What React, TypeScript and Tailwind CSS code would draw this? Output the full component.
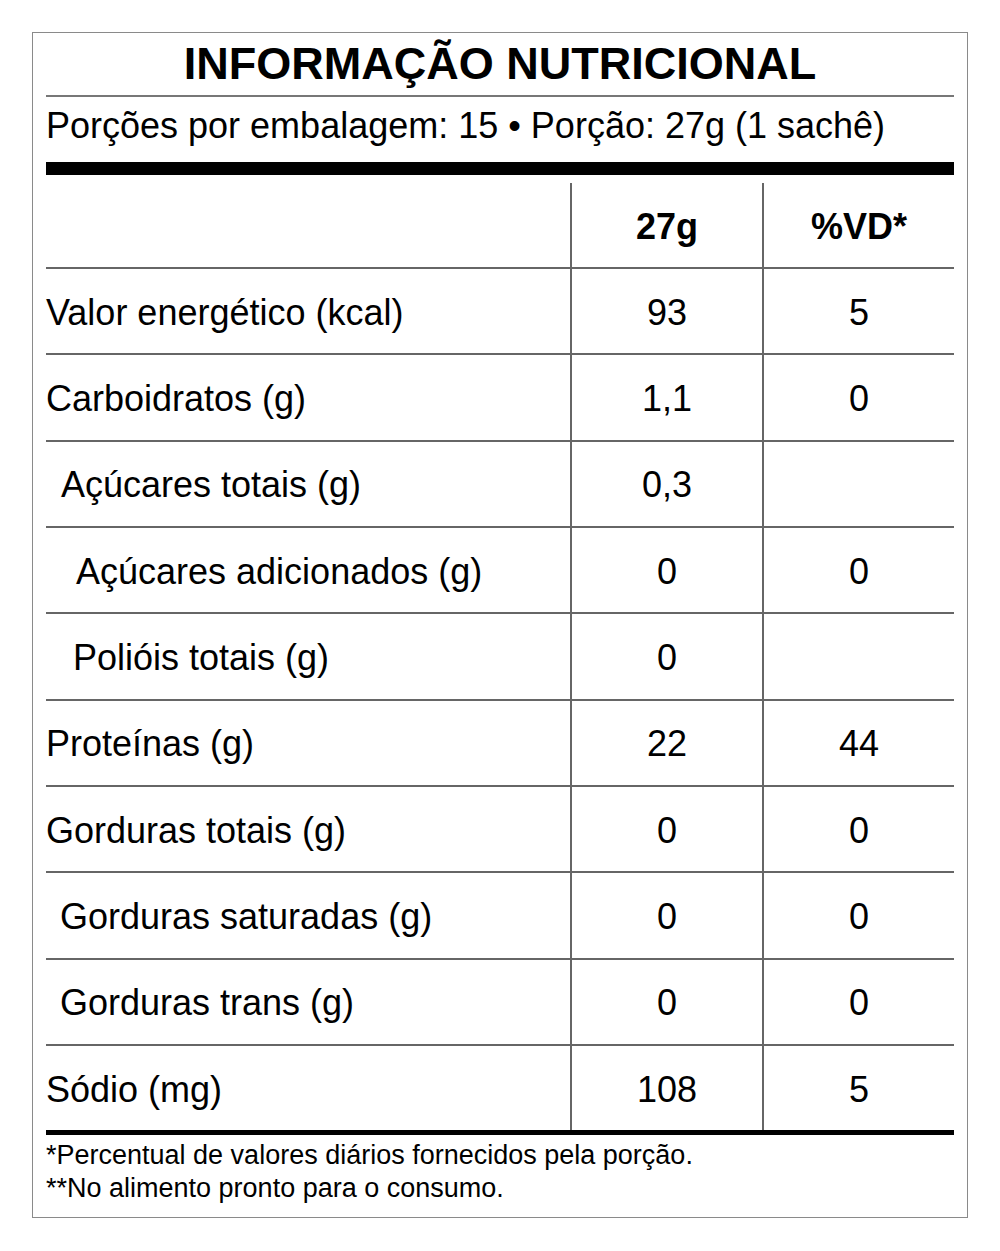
import React from 'react'

interface Row {
  label: string
  indent: string
  amount: string
  vd: string
}

const rows: Row[] = [
  { label: 'Valor energético (kcal)', indent: 'pl-0', amount: '93', vd: '5' },
  { label: 'Carboidratos (g)', indent: 'pl-0', amount: '1,1', vd: '0' },
  { label: 'Açúcares totais (g)', indent: 'pl-[15px]', amount: '0,3', vd: '' },
  { label: 'Açúcares adicionados (g)', indent: 'pl-[30px]', amount: '0', vd: '0' },
  { label: 'Polióis totais (g)', indent: 'pl-[27px]', amount: '0', vd: '' },
  { label: 'Proteínas (g)', indent: 'pl-0', amount: '22', vd: '44' },
  { label: 'Gorduras totais (g)', indent: 'pl-0', amount: '0', vd: '0' },
  { label: 'Gorduras saturadas (g)', indent: 'pl-[14px]', amount: '0', vd: '0' },
  { label: 'Gorduras trans (g)', indent: 'pl-[14px]', amount: '0', vd: '0' },
  { label: 'Sódio (mg)', indent: 'pl-0', amount: '108', vd: '5' },
]

export default function App() {
  return (
    <div className="min-h-screen bg-white pt-[32px] pl-[32px] text-black font-['Liberation_Sans',Arial,sans-serif]">
      <div className="w-[936px] h-[1186px] border border-[#8a8a8a] px-[13px]">
        <h1 className="pt-[5px] text-center text-[45px] leading-[52px] font-bold">INFORMAÇÃO NUTRICIONAL</h1>
        <div className="mt-[5px] h-[2px] bg-[#777]" />
        <p className="mt-[8px] text-[36px] leading-[42px]">
          Porções por embalagem: 15 • Porção: 27g (1 sachê)
        </p>
        <div className="mt-[15px] h-[13px] bg-black" />

        {/* header */}
        <div className="grid grid-cols-[524px_192px_192px] pt-[8px] text-[36px] font-bold">
          <div />
          <div className="h-[84px] pt-[3px] border-l-2 border-[#666] flex items-center justify-center">27g</div>
          <div className="h-[84px] pt-[3px] border-l-2 border-[#666] flex items-center justify-center">%VD*</div>
        </div>

        {rows.map((row) => (
          <div
            key={row.label}
            className="grid grid-cols-[524px_192px_192px] h-[86.33px] border-t-2 border-[#666] text-[36px]"
          >
            <div className={`flex items-center pt-[3px] ${row.indent}`}>{row.label}</div>
            <div className="border-l-2 border-[#666] pt-[3px] flex items-center justify-center">{row.amount}</div>
            <div className="border-l-2 border-[#666] pt-[3px] flex items-center justify-center">{row.vd}</div>
          </div>
        ))}

        <div className="h-[5px] bg-black" />
        <div className="pt-[4px] text-[27px] leading-[33px]">
          <p>*Percentual de valores diários fornecidos pela porção.</p>
          <p>**No alimento pronto para o consumo.</p>
        </div>
      </div>
    </div>
  )
}
